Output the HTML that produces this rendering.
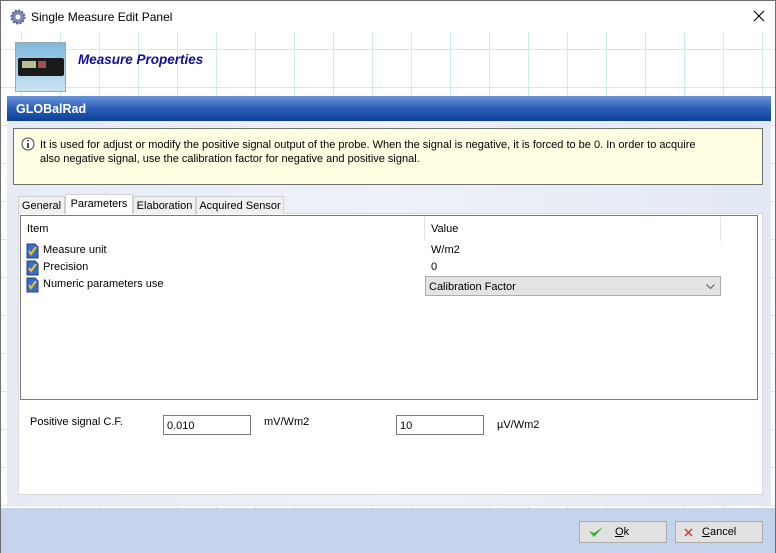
<!DOCTYPE html>
<html><head><style>
*{box-sizing:border-box;margin:0;padding:0}
body{width:776px;height:553px;overflow:hidden;font-family:"Liberation Sans",sans-serif;font-size:11px;color:#000;position:relative;background:#fff}
.win{position:absolute;left:0;top:0;width:776px;height:553px;border:1px solid #6e6e6e}
.title{position:absolute;left:0;top:0;width:774px;height:31px;background:#fff}
.grid{position:absolute;left:0;top:31px;width:774px;height:476px;background-color:#fff;
background-image:linear-gradient(90deg,#c8eef2 1px,transparent 1px),linear-gradient(0deg,#c8eef2 1px,transparent 1px);
background-size:39px 38px;background-position:20px 18px}
.a{position:absolute;white-space:nowrap}
.bar{left:6px;top:95px;width:764px;height:25px;background:linear-gradient(#6a94d8,#2b5fb8 50%,#0e3f98);color:#fff;font-weight:bold;font-size:12.5px;padding:6px 0 0 9px}
.panel{left:6px;top:120px;width:764px;height:384px;background:linear-gradient(90deg,#e6ebf5,#eef1f8 50%,#e3e9f4)}
.info{left:12px;top:127px;width:750px;height:57px;background:#fffee2;border:1px solid #707070;font-size:11px;line-height:14px;padding:9px 0 0 26px;white-space:normal}
.tab{top:195px;height:18px;border:1px solid #d0d0d0;border-bottom:none;background:#f0f0f0;padding:3px 0 0;text-align:center;font-size:11px}
.content{left:17px;top:212px;width:745px;height:282px;background:#fff;border:1px solid #d9d9d9}
.list{left:19px;top:214px;width:738px;height:185px;border:1px solid #7a7a7a;background:#fff}
.row{font-size:11px}
.input{height:20px;border:1px solid #7a7a7a;background:#fff;padding:4px 0 0 3px;font-size:11px}
.btn{top:520px;height:22px;border:1px solid #adadad;background:#e1e1e1;font-size:11px}
.bottom{left:0;top:507px;width:774px;height:45px;background:#c5d3ec}
</style></head><body>
<div class="win">
<div class="title">
<svg class="a" style="left:9px;top:8px" width="16" height="16" viewBox="0 0 16 16"><circle cx="8" cy="8" r="6.5" fill="#7f86b8" stroke="#5a5f8f" stroke-width="2" stroke-dasharray="2 1.4"/><circle cx="8" cy="8" r="2.5" fill="#fff"/></svg>
<div class="a" style="left:30px;top:9px;font-size:12px">Single Measure Edit Panel</div>
<svg class="a" style="left:752px;top:9px" width="12" height="12" viewBox="0 0 12 12"><path d="M1 1l10 10M11 1L1 11" stroke="#000" stroke-width="1.1"/></svg>
</div>
<div class="grid"></div>
<div class="a" style="left:14px;top:41px;width:51px;height:50px;background:linear-gradient(#7fb8de,#cbe3f1);border:1px solid #9aa"></div>
<div class="a" style="left:17px;top:57px;width:46px;height:18px;background:#1a1a1a;border-radius:2px"></div>
<div class="a" style="left:21px;top:60px;width:14px;height:7px;background:#b8c090"></div>
<div class="a" style="left:37px;top:60px;width:8px;height:7px;background:#a05050"></div>
<div class="a" style="left:77px;top:51px;color:#10109a;font-weight:bold;font-style:italic;font-size:13.5px">Measure Properties</div>
<div class="a bar">GLOBalRad</div>
<div class="a panel"></div>
<div class="a info">It is used for adjust or modify the positive signal output of the probe. When the signal is negative, it is forced to be 0. In order to acquire<br>also negative signal, use the calibration factor for negative and positive signal.</div>
<svg class="a" style="left:20px;top:136px" width="14" height="14" viewBox="0 0 14 14"><circle cx="7" cy="7" r="6" fill="#fff" stroke="#444"/><rect x="6.3" y="6" width="1.4" height="5" fill="#000"/><rect x="6.3" y="3" width="1.4" height="1.5" fill="#000"/></svg>
<div class="a content"></div>
<div class="a tab" style="left:17px;width:47px">General</div>
<div class="a tab" style="left:64px;top:193px;height:20px;width:68px;background:#fff">Parameters</div>
<div class="a tab" style="left:132px;width:63px">Elaboration</div>
<div class="a tab" style="left:195px;width:88px">Acquired Sensor</div>
<div class="a list"></div>
<div class="a" style="left:423px;top:216px;width:1px;height:24px;background:#e5e5e5"></div>
<div class="a" style="left:719px;top:216px;width:1px;height:24px;background:#e5e5e5"></div>
<div class="a row" style="left:26px;top:222px">Item</div>
<div class="a row" style="left:430px;top:222px">Value</div>
<div class="a row" style="left:42px;top:243px">Measure unit</div>
<div class="a row" style="left:42px;top:260px">Precision</div>
<div class="a row" style="left:42px;top:277px">Numeric parameters use</div>
<div class="a row" style="left:430px;top:243px">W/m2</div>
<div class="a row" style="left:430px;top:260px">0</div>
<svg class="a" style="left:25px;top:241px" width="14" height="51" viewBox="0 0 14 51">
<g id="i"><path d="M1 2h8l3 3v11H1z" fill="#3a6fc0" stroke="#1c3f88"/><path d="M3 9l2 3 5-7" stroke="#f0c030" stroke-width="2" fill="none"/></g>
<use href="#i" y="17"/><use href="#i" y="34"/></svg>
<div class="a" style="left:424px;top:275px;width:296px;height:20px;background:#e3e3e3;border:1px solid #adadad;font-size:11px;padding:4px 0 0 3px">Calibration Factor
<svg style="position:absolute;right:5px;top:7px" width="9" height="5" viewBox="0 0 9 5"><path d="M0.5 0.5l4 4 4-4" stroke="#555" fill="none"/></svg></div>
<div class="a row" style="left:29px;top:415px">Positive signal C.F.</div>
<div class="a input" style="left:162px;top:414px;width:88px">0.010</div>
<div class="a row" style="left:263px;top:415px">mV/Wm2</div>
<div class="a input" style="left:395px;top:414px;width:88px">10</div>
<div class="a row" style="left:496px;top:418px">µV/Wm2</div>
<div class="a bottom"></div>
<div class="a btn" style="left:578px;width:88px"><svg style="position:absolute;left:8px;top:3px" width="16" height="14" viewBox="0 0 16 14"><path d="M1 6l5 6 9-10-9 6z" fill="#2bb52b"/></svg><span style="position:absolute;left:35px;top:4px"><u>O</u>k</span></div>
<div class="a btn" style="left:674px;width:88px"><svg style="position:absolute;left:8px;top:6px" width="9" height="9" viewBox="0 0 9 9"><path d="M1 1l7 7M8 1L1 8" stroke="#e03030" stroke-width="1.4"/></svg><span style="position:absolute;left:26px;top:4px"><u>C</u>ancel</span></div>
</div>
</body></html>
